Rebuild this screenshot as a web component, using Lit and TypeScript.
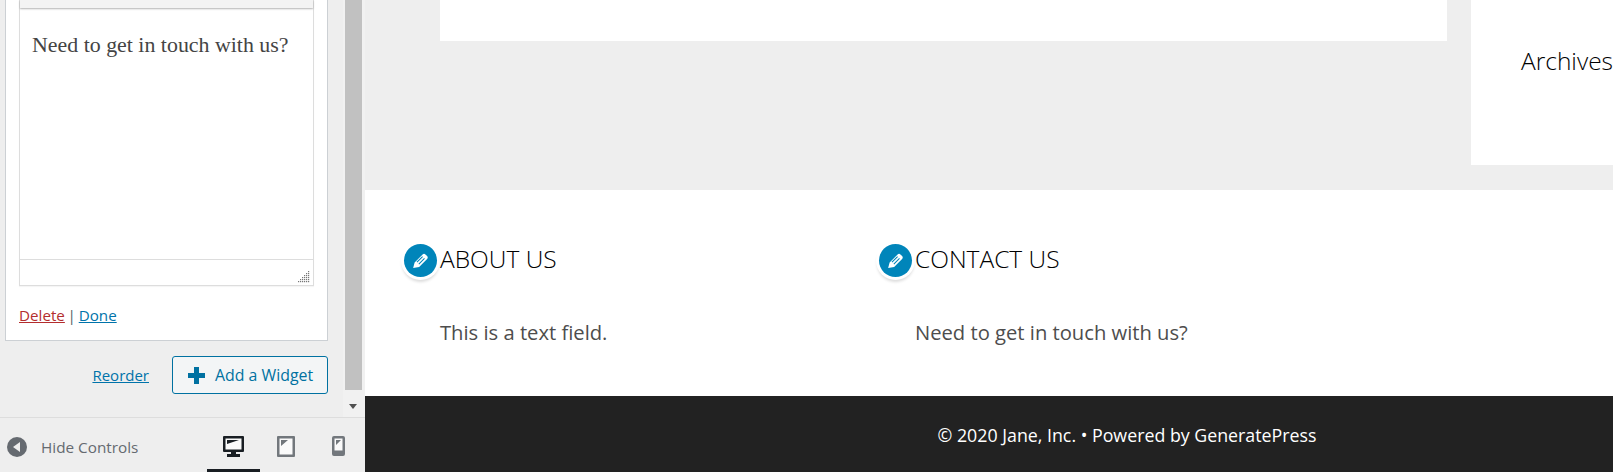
import { LitElement, html, css, svg } from "lit";
import { customElement } from "lit/decorators.js";

const pencil = svg`<svg class="pencil" viewBox="0 0 20 20" width="21" height="21"><path fill="#fff" d="M3 17.2l1.4-5.4 7.6-7.6c.8-.8 1.9-.8 2.7 0l1.6 1.6c.8.8.8 1.9 0 2.7l-7.6 7.6z"/><path stroke="#0085ba" stroke-width="1" fill="none" d="M6.6 11.6l5.4-5.4M8.4 13.4l5.4-5.4"/></svg>`;

const gripDots = Array.from({ length: 6 }, (_, row) => row).flatMap((row) =>
  Array.from({ length: row + 1 }, (_, col) => svg`<rect x="${10 - col * 2}" y="${row * 2}" width="1.2" height="1.2"/>`)
);

@customElement("app-root")
export class AppRoot extends LitElement {
  static styles = css`
    :host { display: block; height: 472px; overflow: hidden; font-family: "Open Sans", sans-serif; }
    * { box-sizing: border-box; }
    .page { display: flex; height: 472px; width: 1613px; overflow: hidden; }
    .controls { width: 365px; flex: none; display: flex; flex-direction: column; background: #eeeeee; }
    .scroll { height: 418px; flex: none; display: flex; border-bottom: 1px solid #dddddd; }
    .pane { width: 343px; padding: 0 15px 0 5px; }
    .card { height: 341px; background: #fff; border: 1px solid #ccd0d4; border-top: 0; padding: 0 13px; }
    .editor { height: 286px; border: 1px solid #dddddd; border-top: 0; display: flex; flex-direction: column; box-shadow: 0 1px 1px rgba(0,0,0,.04); }
    .toolbar { height: 8px; background: #f3f3f3; flex: none; box-shadow: 0 1px 2px rgba(0,0,0,.3); }
    .body { flex: 1; padding: 22px 12px 0; font-family: "Liberation Serif", serif; font-size: 21.9px; line-height: 30px; color: #444; }
    .status { height: 26px; flex: none; border-top: 1px solid #dddddd; display: flex; justify-content: flex-end; align-items: flex-end; padding: 0 3px 2px 0; }
    .grip { display: block; fill: #777; }
    .links { margin-top: 19px; font-size: 15.2px; line-height: 20px; color: #555d66; word-spacing: -1.2px; }
    .links a { text-decoration: underline; }
    .delete { color: #b32d2e; }
    .done { color: #0073aa; }
    .actions { display: flex; justify-content: flex-end; align-items: center; gap: 23px; margin-top: 15px; }
    .reorder { color: #0073aa; font-size: 15px; text-decoration: underline; }
    .add { width: 156px; height: 38px; display: flex; align-items: center; gap: 10px; padding: 0 0 0 15px; border: 1px solid #0071a1; border-radius: 3px; background: #f3f5f6; color: #0071a1; font-size: 15.9px; white-space: nowrap; }
    .track { width: 22px; flex: none; display: flex; flex-direction: column; padding-left: 2px; background: #f1f1f1; }
    .thumb { width: 17px; height: 390px; background: #c1c1c1; flex: none; }
    .arrow { margin-top: 14px; margin-left: 4px; width: 0; height: 0; border: 4.5px solid transparent; border-top: 5px solid #505050; border-bottom: 0; }
    .bar { flex: 1; display: flex; align-items: flex-start; }
    .hide { display: flex; align-items: center; gap: 14px; height: 58px; padding-left: 7px; color: #656a70; font-size: 15.3px; }
    .dev { margin-left: auto; display: flex; padding-right: 1px; }
    .dev span { width: 52px; height: 54px; display: flex; align-items: center; justify-content: center; padding-top: 2px; }
    .dev span.on { border-bottom: 3px solid #191e23; width: 53px; padding-top: 5px; }
    .frame { flex: 1; min-width: 0; overflow: hidden; }
    .site { width: 1524px; height: 472px; display: flex; flex-direction: column; }
    .top { height: 190px; flex: none; background: #eeeeee; display: flex; align-items: flex-start; padding-left: 75px; gap: 24px; }
    .article { width: 1007px; height: 41px; background: #fff; flex: none; }
    .aside { flex: 1; height: 165px; background: #fff; padding: 44px 50px; font-size: 24.5px; line-height: 34px; color: #000; font-weight: 300; }
    .widgets { height: 206px; flex: none; background: #fff; display: flex; padding: 50px 0 0 75px; }
    .widget { width: 475px; }
    .title { display: flex; align-items: center; height: 36px; position: relative; font-size: 24.5px; font-weight: 300; color: #000; }
    .badge { position: absolute; left: -36px; top: 4px; width: 33px; height: 33px; border-radius: 50%; background: #0085ba; display: flex; align-items: center; justify-content: center; box-shadow: 0 0 0 3px #fff, 0 3px 3px 2px rgba(0,0,0,.14); }
    .text { margin-top: 41px; font-size: 20.2px; line-height: 30px; color: #4d4d4d; font-weight: 400; }
    .foot { flex: 1; background: #222222; color: #fff; display: flex; align-items: center; justify-content: center; font-size: 17.8px; font-weight: 400; padding-top: 2px; }
  `;

  render() {
    return html`<div class="page">
      <section class="controls">
        <div class="scroll">
          <div class="pane">
            <div class="card">
              <div class="editor">
                <div class="toolbar"></div>
                <div class="body">Need to get in touch with us?</div>
                <div class="status">
                  <svg class="grip" width="12" height="12" viewBox="0 0 12 12">${gripDots}</svg>
                </div>
              </div>
              <div class="links"><a class="delete">Delete</a> | <a class="done">Done</a></div>
            </div>
            <div class="actions">
              <a class="reorder">Reorder</a>
              <div class="add">
                <svg width="17" height="17" viewBox="0 0 17 17" fill="#0071a1"><path d="M6 0h5v6h6v5h-6v6H6v-6H0V6h6z"/></svg>
                <span>Add a Widget</span>
              </div>
            </div>
          </div>
          <div class="track"><div class="thumb"></div><div class="arrow"></div></div>
        </div>
        <div class="bar">
          <div class="hide">
            <svg width="20" height="20" viewBox="0 0 20 20"><circle cx="10" cy="10" r="10" fill="#656a70"/><path d="M13 5v10l-7-5z" fill="#eee"/></svg>
            <span>Hide Controls</span>
          </div>
          <div class="dev">
            <span class="on"><svg width="21" height="21" viewBox="0 0 21 21"><rect x="2" y="2" width="17" height="12" fill="#fafafa"/><path fill="#191e23" fill-rule="evenodd" d="M1 0h19a1 1 0 0 1 1 1v14a1 1 0 0 1-1 1h-7v2h4v3H4v-3h4v-2H1a1 1 0 0 1-1-1V1a1 1 0 0 1 1-1zM2.5 2.5v11h16v-11zM4 4h12L4 8z"/></svg></span>
            <span><svg width="18" height="21" viewBox="0 0 18 21"><rect x="2" y="2" width="14" height="17" fill="#fafafa"/><path fill="#72777c" fill-rule="evenodd" d="M1 0h16a1 1 0 0 1 1 1v19a1 1 0 0 1-1 1H1a1 1 0 0 1-1-1V1a1 1 0 0 1 1-1zM2.5 2.5v16h13v-16zM4 4h7L4 10z"/></svg></span>
            <span><svg width="13" height="20" viewBox="0 0 13 20"><rect x="2" y="2" width="9" height="13" fill="#fafafa"/><path fill="#72777c" fill-rule="evenodd" d="M2 0h9a2 2 0 0 1 2 2v16a2 2 0 0 1-2 2H2a2 2 0 0 1-2-2V2a2 2 0 0 1 2-2zM2.5 2.5v12h8v-12zM4 4h5L4 9z"/></svg></span>
          </div>
        </div>
      </section>
      <main class="frame">
        <div class="site">
          <div class="top">
            <div class="article"></div>
            <div class="aside">Archives</div>
          </div>
          <div class="widgets">
            <div class="widget">
              <div class="title"><span class="badge">${pencil}</span>ABOUT US</div>
              <div class="text">This is a text field.</div>
            </div>
            <div class="widget">
              <div class="title"><span class="badge">${pencil}</span>CONTACT US</div>
              <div class="text">Need to get in touch with us?</div>
            </div>
          </div>
          <div class="foot">© 2020 Jane, Inc. • Powered by GeneratePress</div>
        </div>
      </main>
    </div>`;
  }
}
